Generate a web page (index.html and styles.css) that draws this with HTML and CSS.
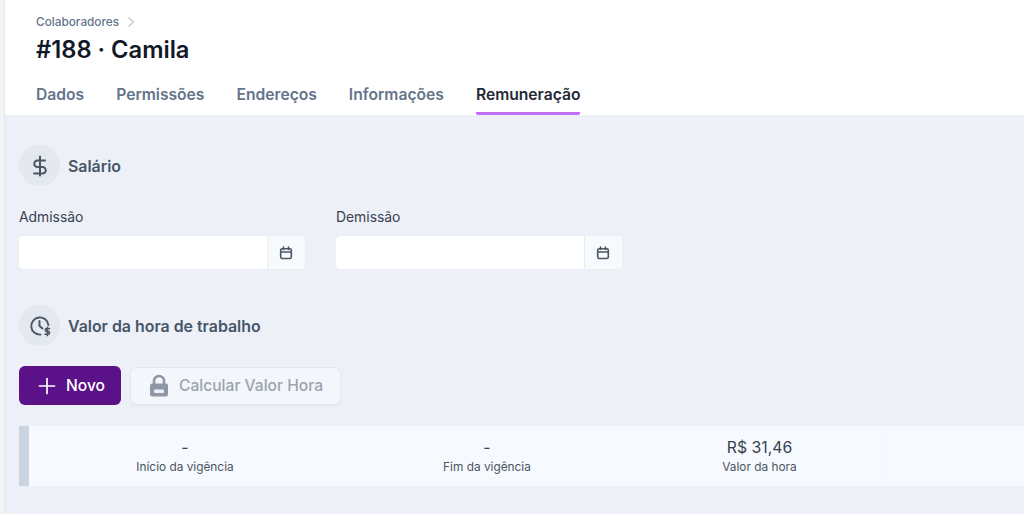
FILE: index.html
```html
<!DOCTYPE html>
<html lang="pt-BR">
<head>
<meta charset="utf-8">
<title>Colaboradores</title>
<link rel="stylesheet" href="styles.css">
</head>
<body>
<div class="page">
  <header class="header">
    <nav class="crumbs"><span>Colaboradores</span>
      <svg class="crumb-icon" viewBox="0 0 10 12" width="10" height="12"><path d="M2.5 1.5 7.5 6l-5 4.5" fill="none" stroke="#c3c9d4" stroke-width="1.3"/></svg>
    </nav>
    <h1 class="title">#188 · Camila</h1>
    <div class="tabs">
      <a class="tab">Dados</a>
      <a class="tab">Permissões</a>
      <a class="tab">Endereços</a>
      <a class="tab">Informações</a>
      <a class="tab tab-active">Remuneração</a>
    </div>
  </header>
  <main class="main">
    <section class="heading">
      <span class="circle">
        <svg viewBox="0 0 24 24" width="24" height="24" fill="none" stroke="#4b5563" stroke-width="2" stroke-linecap="round" stroke-linejoin="round"><path d="M12 2.5v19"/><path d="M17 6.5H9.5a3.2 3.2 0 0 0 0 6.5h5a3.2 3.2 0 0 1 0 6.5H6"/></svg>
      </span>
      <h2 class="heading-text">Salário</h2>
    </section>
    <div class="fields">
      <div class="field">
        <label class="label">Admissão</label>
        <div class="input">
          <span class="input-box"></span>
          <span class="addon"><svg viewBox="0 0 14 14" width="14" height="14" fill="none" stroke="#4b5563" stroke-width="1.6" stroke-linecap="round"><rect x="1.7" y="2.7" width="10.6" height="9.8" rx="1.6"/><path d="M1.7 6h10.6M4.5 1v2.5M9.5 1v2.5"/></svg></span>
        </div>
      </div>
      <div class="field">
        <label class="label">Demissão</label>
        <div class="input">
          <span class="input-box"></span>
          <span class="addon"><svg viewBox="0 0 14 14" width="14" height="14" fill="none" stroke="#4b5563" stroke-width="1.6" stroke-linecap="round"><rect x="1.7" y="2.7" width="10.6" height="9.8" rx="1.6"/><path d="M1.7 6h10.6M4.5 1v2.5M9.5 1v2.5"/></svg></span>
        </div>
      </div>
    </div>
    <section class="heading heading-second">
      <span class="circle">
        <svg viewBox="0 0 24 24" width="24" height="24" fill="none" stroke="#4b5563" stroke-width="1.9" stroke-linecap="round" stroke-linejoin="round"><path d="M12.5 20.6A8.6 8.6 0 1 1 20.4 11"/><path d="M11.5 7v5l3 2.5"/><path d="M21.5 14.6h-2.8a1.3 1.3 0 0 0 0 2.8h1.4a1.3 1.3 0 0 1 0 2.8H17M19.4 13.4v8.2" stroke-width="1.6"/></svg>
      </span>
      <h2 class="heading-text">Valor da hora de trabalho</h2>
    </section>
    <div class="actions">
      <button class="btn btn-primary">
        <svg viewBox="0 0 18 18" width="18" height="18" fill="none" stroke="#fff" stroke-width="1.7" stroke-linecap="round"><path d="M9 1.5v15M1.5 9h15"/></svg>
        Novo
      </button>
      <button class="btn btn-disabled">
        <svg viewBox="0 0 20 24" width="20" height="24"><path d="M5 10V7a5 5 0 0 1 10 0v3" fill="none" stroke="#8f97a5" stroke-width="2.6"/><path d="M3.2 9.5h13.6a2.2 2.2 0 0 1 2.2 2.2v8.6a2.2 2.2 0 0 1-2.2 2.2H3.2A2.2 2.2 0 0 1 1 20.3v-8.6a2.2 2.2 0 0 1 2.2-2.2Z" fill="#8f97a5"/><rect x="5" y="15.5" width="10" height="3.5" rx="1" fill="#eef1f6"/></svg>
        Calcular Valor Hora
      </button>
    </div>
    <div class="record">
      <div class="cell"><span class="value">-</span><span class="caption">Início da vigência</span></div>
      <div class="cell"><span class="value">-</span><span class="caption">Fim da vigência</span></div>
      <div class="cell"><span class="value">R$ 31,46</span><span class="caption">Valor da hora</span></div>
      <div class="cell cell-empty"></div>
    </div>
  </main>
</div>
</body>
</html>
```
FILE: styles.css
```css
* { box-sizing: border-box; }
html, body { height: 100%; }
body {
  margin: 0;
  background: #f3f4f6;
  font-family: Inter, "Liberation Sans", sans-serif;
  color: #1f2937;
  overflow: hidden;
}
.page {
  margin-left: 4px;
  height: 514px;
  display: flex;
  flex-direction: column;
  border-left: 1px solid #e5e7eb;
}
.header {
  background: #fff;
  padding: 15px 0 0 31px;
  height: 115px;
  flex: none;
}
.crumbs {
  display: flex;
  align-items: center;
  gap: 7px;
  height: 14px;
  font-size: 11.8px;
  font-weight: 500;
  color: #64748b;
}
.title {
  margin: 7px 0 0;
  font-size: 23.7px;
  line-height: 28px;
  font-weight: 600;
  color: #111827;
}
.tabs {
  display: flex;
  gap: 32px;
  margin-top: 14px;
}
.tab {
  height: 37px;
  padding-top: 7px;
  font-size: 15.65px;
  line-height: 20px;
  font-weight: 600;
  color: #64748b;
}
.tab-active {
  color: #1f2937;
  border-bottom: 3px solid #c06ef5;
  border-radius: 2px;
}
.main {
  flex: 1;
  background: #edf0f7;
  padding: 30px 0 0 14px;
}
.heading {
  display: flex;
  align-items: center;
  gap: 8px;
}
.heading-second { margin-top: 36px; }
.circle {
  width: 41px;
  height: 41px;
  border-radius: 50%;
  background: #e4e8ef;
  display: flex;
  align-items: center;
  justify-content: center;
  flex: none;
}
.heading-text {
  margin: 0;
  padding-top: 1px;
  font-size: 15.9px;
  font-weight: 600;
  color: #475569;
}
.fields {
  display: flex;
  gap: 31px;
  margin-top: 22px;
}
.field { width: 286px; }
.label {
  display: block;
  font-size: 13.9px;
  line-height: 18px;
  color: #374151;
}
.input {
  display: flex;
  height: 33px;
  margin-top: 10px;
  border-radius: 4px;
  overflow: hidden;
  background: #fff;
  box-shadow: 0 0 1px #dfe3ea;
}
.input-box { flex: 1; }
.addon {
  width: 38px;
  padding-right: 2px;
  background: #f7fafd;
  border-left: 1px solid #e9edf3;
  display: flex;
  align-items: center;
  justify-content: center;
}
.actions {
  display: flex;
  align-items: center;
  gap: 9px;
  margin-top: 20px;
}
.btn {
  font-family: inherit;
  border-radius: 6px;
  display: flex;
  align-items: center;
  border: 0;
  padding: 0;
}
.btn-primary {
  width: 102px;
  height: 39px;
  background: #5b1289;
  color: #fff;
  font-size: 15.6px;
  font-weight: 500;
  gap: 10px;
  padding-left: 19px;
}
.btn-disabled {
  width: 211px;
  height: 38px;
  background: #f3f6fa;
  border: 1px solid #e3e7ee;
  color: #9ca3af;
  font-size: 15.6px;
  font-weight: 500;
  gap: 10px;
  padding-left: 18px;
  box-shadow: 0 1px 2px rgba(0,0,0,.04);
}
.record {
  display: grid;
  grid-template-columns: 312px 292px 253px 1fr;
  height: 60px;
  margin-top: 21px;
  background: #f6f9fd;
  border-left: 10px solid #cbd5e1;
}
.cell {
  display: flex;
  flex-direction: column;
  align-items: center;
  padding-top: 12px;
}
.cell-empty { border-left: 1px solid #f4f7fb; }
.value {
  font-size: 15.8px;
  line-height: 20px;
  color: #374151;
}
.caption {
  font-size: 11.85px;
  line-height: 14px;
  margin-top: 2px;
  color: #4b5563;
}
```
